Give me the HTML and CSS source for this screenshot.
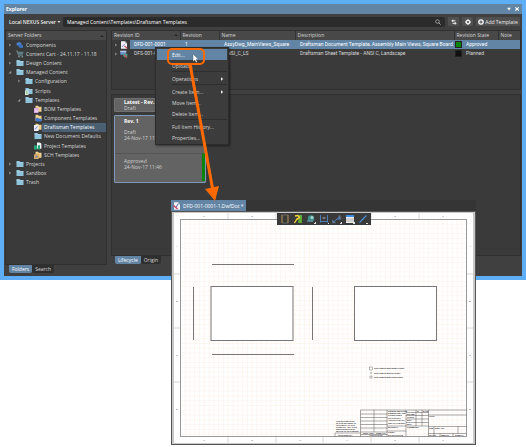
FILE: index.html
```html
<!DOCTYPE html>
<html lang="en">
<head>
  <meta charset="UTF-8">
  <title>Explorer</title>
  <link rel="stylesheet" href="styles.css">
</head>
<body>
  <!-- shared icons -->
  <svg class="defs" width="0" height="0">
    <symbol id="folder" viewBox="0 0 8 8"><path d="M0.5 1h3l0.8 1h3.2v5h-7z" fill="#8fc3dc"/><path d="M0.5 2.6h7" stroke="#b9dcec" stroke-width="0.5"/></symbol>
    <symbol id="folder-tan" viewBox="0 0 8 8"><path d="M1.5 0.8h2.6l0.7 0.9h2.7v5h-6z" fill="#ecd08e"/></symbol>
    <symbol id="page" viewBox="0 0 8 8"><path d="M1 0.3h4l2 2v5.4H1z" fill="#f2f2f4"/><path d="M5 0.3v2h2z" fill="#9aa6b4"/></symbol>
    <symbol id="open" viewBox="0 0 4 4"><path d="M3.2 0.8v2.6H0.6z" fill="#999"/></symbol>
    <symbol id="closed" viewBox="0 0 4 4"><path d="M1 0.4L3.4 2L1 3.6z" fill="#808080"/></symbol>
    <symbol id="submenu" viewBox="0 0 4 4"><path d="M1 0.2L3.2 2L1 3.8z" fill="#eee"/></symbol>
  </svg>

  <main class="explorer">
    <header class="titlebar">
      <h1>Explorer</h1>
      <button aria-label="Menu"><svg viewBox="0 0 6 6"><path d="M1 1.7h4L3 4.5z" fill="#fff"/></svg></button>
      <button aria-label="Close"><svg viewBox="0 0 6 6"><path d="M1.3 1.3l3.4 3.4M4.7 1.3L1.3 4.7" stroke="#fff" stroke-width="1.2"/></svg></button>
    </header>

    <div class="toolbar">
      <button class="server">Local NEXUS Server <svg viewBox="0 0 4 4"><path d="M0.4 1h3L2 3z" fill="#ddd"/></svg></button>
      <div class="path">
        <input type="text" aria-label="Path" value="Managed Content\Templates\Draftsman Templates">
        <svg viewBox="0 0 6 6"><circle cx="2.5" cy="2.5" r="1.8" fill="none" stroke="#aaa" stroke-width="0.8"/><path d="M3.8 3.8L5.6 5.6" stroke="#aaa"/></svg>
      </div>
      <button class="tool" aria-label="Refresh"><svg viewBox="0 0 6 6"><path d="M0.8 1.8h3.6M1.6 4.3h3.6" stroke="#eee" stroke-width="1"/><path d="M2.2 0.2v3.2L0.5 1.8zM3.8 2.7v3.2l1.7-1.6z" fill="#eee"/></svg></button>
      <button class="tool" aria-label="Settings"><svg viewBox="0 0 6 6"><circle cx="3" cy="3" r="1.7" fill="none" stroke="#eee" stroke-width="1.3"/><path d="M3 0v1M3 5v1M0 3h1M5 3h1M0.9 0.9l0.6 0.6M4.5 4.5l0.6 0.6M5.1 0.9l-0.6 0.6M0.9 5.1l0.6-0.6" stroke="#eee"/></svg></button>
      <button class="tool add"><svg viewBox="0 0 6 6"><circle cx="3" cy="3" r="2.8" fill="#fff"/><path d="M3 1.4v3.2M1.4 3h3.2" stroke="#484848"/></svg>Add Template</button>
    </div>

    <div class="panes">
      <section class="left">
        <div class="panel folders">
          <h2>Server Folders <svg viewBox="0 0 4 4"><path d="M0.2 3h3.6L2 1z" fill="#222"/></svg></h2>
          <ul class="tree">
            <li><svg><use href="#closed"/></svg><svg viewBox="0 0 8 8"><ellipse cx="3" cy="3" rx="2.6" ry="1.8" fill="#4f87cf"/><path d="M2 3l5 1v3H4L2 5z" fill="#3b6fb8"/></svg><span>Components</span></li>
            <li><svg><use href="#closed"/></svg><svg viewBox="0 0 8 8"><path d="M0 1h1.4l1 4.2h4.4" fill="none" stroke="#8aa" stroke-width="0.7"/><path d="M1.8 1.8h5.8L6.9 4.6H2.4z" fill="#5f7f88"/><circle cx="3" cy="6.7" r="0.7" fill="#9bb"/><circle cx="6.2" cy="6.7" r="0.7" fill="#9bb"/></svg><span>Content Cart - 24.11.17 - 11.18</span></li>
            <li><svg><use href="#closed"/></svg><svg><use href="#folder"/></svg><span>Design Content</span></li>
            <li><svg><use href="#open"/></svg><svg><use href="#folder"/></svg><span>Managed Content</span></li>
            <li class="level1"><svg><use href="#closed"/></svg><svg><use href="#folder"/></svg><span>Configuration</span></li>
            <li class="level1"><svg></svg><svg viewBox="0 0 8 8"><use href="#folder"/><path d="M0 3.4h3.6V8H0z" fill="#d5ecd9"/><path d="M0.8 4.8h2M0.8 6.2h2" stroke="#5a9a6a" stroke-width="0.6"/></svg><span>Scripts</span></li>
            <li class="level1"><svg><use href="#open"/></svg><svg><use href="#folder"/></svg><span>Templates</span></li>
            <li class="level2"><svg></svg><svg viewBox="0 0 8 8"><use href="#folder-tan"/><path d="M0 3h4.4v5H0z" fill="#d8a0e0"/><path d="M0.8 5h3M0.8 6.4h3" stroke="#fff" stroke-width="0.6"/></svg><span>BOM Templates</span></li>
            <li class="level2"><svg></svg><svg viewBox="0 0 8 8"><use href="#folder-tan"/><path d="M1 5.2l2-1.4 4.6 1.4v2.4H3z" fill="#3d74cc"/></svg><span>Component Templates</span></li>
            <li class="level2 selected"><svg></svg><svg viewBox="0 0 8 8"><use href="#folder-tan"/><path d="M0 2h4.6v6H0z" fill="#f2eefc"/><path d="M1 6.5l2.4-3" stroke="#5b62c0" stroke-width="0.8"/></svg><span>Draftsman Templates</span></li>
            <li class="level2"><svg></svg><svg><use href="#folder"/></svg><span>New Document Defaults</span></li>
            <li class="level2"><svg></svg><svg viewBox="0 0 8 8"><path d="M3 0.4h3l1.4 1.4v5H3z" fill="#f1f7f4"/><path d="M0 3.4h3.2v4H0zM4 3.2h2v4.2H4z" fill="#22a878"/></svg><span>Project Templates</span></li>
            <li class="level2"><svg></svg><svg viewBox="0 0 8 8"><use href="#folder-tan"/><path d="M0 3.8l2-1h3.4V7L4 8H0z" fill="#dcb062"/><path d="M1.4 4.6h2.2v2H1.4z" fill="#7d7cb0"/></svg><span>SCH Templates</span></li>
            <li><svg><use href="#closed"/></svg><svg><use href="#folder"/></svg><span>Projects</span></li>
            <li><svg><use href="#closed"/></svg><svg><use href="#folder"/></svg><span>Sandbox</span></li>
            <li><svg></svg><svg><use href="#folder"/></svg><span>Trash</span></li>
          </ul>
        </div>
        <nav class="tabs"><button class="active">Folders</button><button>Search</button></nav>
      </section>

      <section class="right">
        <div class="panel revisions">
          <table>
            <colgroup><col class="c-id"><col class="c-rev"><col class="c-name"><col><col class="c-state"><col class="c-note"></colgroup>
            <thead>
              <tr><th>Revision ID <svg viewBox="0 0 4 4"><path d="M0.2 3h3.6L2 1z" fill="#222"/></svg></th><th>Revision</th><th>Name</th><th>Description</th><th>Revision State</th><th>Note</th></tr>
            </thead>
            <tbody>
              <tr class="selected">
                <td><div class="item"><svg><use href="#closed"/></svg><svg viewBox="0 0 8 8"><use href="#page"/><path d="M2 6l2.5-3" stroke="#6470c8" stroke-width="0.8"/><path d="M4.5 5l2.8 2.4" stroke="#d04a5a" stroke-width="1.2"/></svg><span>DFD-001-0001</span></div></td>
                <td>1</td><td>AssyDwg_MainViews_Square</td><td>Draftsman Document Template, Assembly Main Views, Square Board</td>
                <td><i class="swatch approved"></i>Approved</td><td></td>
              </tr>
              <tr>
                <td><div class="item"><svg><use href="#closed"/></svg><svg viewBox="0 0 8 8"><path d="M0.3 0.8h6v4h-6z" fill="#6d8ed0"/><path d="M0.3 0.8h6v1.3h-6z" fill="#bcd"/><path d="M2.5 3.8h4.8v3.4H4z" fill="#4fa287"/><path d="M4 5l3 2.6" stroke="#d04a5a" stroke-width="1.2"/></svg><span>DFS-001-0001</span></div></td>
                <td>1</td><td>ANSI_C_LS</td><td>Draftsman Sheet Template - ANSI C, Landscape</td>
                <td><i class="swatch planned"></i>Planned</td><td></td>
              </tr>
            </tbody>
          </table>
        </div>
        <div class="panel lifecycle">
          <article class="card latest"><h3>Latest - Rev.</h3><p>Draft</p></article>
          <article class="card current">
            <h3>Rev. 1</h3>
            <p>Draft<br>24-Nov-17 11:46</p>
            <p class="state">Approved<br>24-Nov-17 11:46</p>
          </article>
        </div>
        <nav class="tabs"><button class="active">Lifecycle</button><button>Origin</button></nav>
      </section>
    </div>
  </main>

  <menu class="context">
    <li><button class="hover">Edit...</button></li>
    <li><button>Upload...</button></li>
    <li class="sep"></li>
    <li><button>Operations <svg><use href="#submenu"/></svg></button></li>
    <li class="sep"></li>
    <li><button>Create Item... <svg><use href="#submenu"/></svg></button></li>
    <li><button>Move Item...</button></li>
    <li><button>Delete Item...</button></li>
    <li class="sep"></li>
    <li><button>Full Item History...</button></li>
    <li><button>Properties...</button></li>
  </menu>

  <section class="document">
    <div class="doc-tabs">
      <button><svg viewBox="0 0 8 8"><use href="#page"/><path d="M2.5 6l2.5-4" stroke="#5666c8"/><path d="M0.5 3.5l4 3.5" stroke="#d0405a" stroke-width="1.3"/></svg>DFD-001-0001-1.DwfDot *</button>
    </div>
    <div class="sheet">
      <svg class="drawing" viewBox="0 0 299 230">
        <defs>
          <pattern id="grid" x="6" y="6" width="4.77" height="4.77" patternUnits="userSpaceOnUse"><path d="M4.77 0H0V4.77" fill="none" stroke="#fbece1" stroke-width="0.8"/></pattern>
        </defs>
        <rect x="6.5" y="6.5" width="286" height="217" fill="url(#grid)" stroke="#999"/>
        <!-- zone marks -->
        <path d="M54 0v6M102 0v6M149 0v6M197 0v6M245 0v6M54 224v6M102 224v6M149 224v6M197 224v6M245 224v6M0 61h6M0 115h6M0 169h6M293 61h6M293 115h6M293 169h6" stroke="#ccc" stroke-width="0.8"/>
        <g class="zones">
          <text x="30" y="4">1</text><text x="78" y="4">2</text><text x="126" y="4">3</text><text x="173" y="4">4</text><text x="221" y="4">5</text><text x="269" y="4">6</text>
          <text x="30" y="228">1</text><text x="78" y="228">2</text><text x="126" y="228">3</text><text x="173" y="228">4</text><text x="221" y="228">5</text><text x="269" y="228">6</text>
          <text x="3" y="34">A</text><text x="3" y="89">B</text><text x="3" y="143">C</text><text x="3" y="197">D</text>
          <text x="296" y="34">A</text><text x="296" y="89">B</text><text x="296" y="143">C</text><text x="296" y="197">D</text>
        </g>
        <!-- board views -->
        <g fill="#fff" stroke="#777" stroke-width="1">
          <rect x="37" y="73.5" width="82" height="54"/>
          <rect x="180.5" y="73.5" width="82" height="54"/>
          <path d="M38 51.5h82M38 141.5h82M19.5 74v53M138.5 74v53"/>
        </g>
        <!-- legend -->
        <g class="legend">
          <rect x="195.5" y="154" width="3" height="3"/><text x="200" y="156">Test element with square center</text>
          <circle cx="197" cy="160" r="0.6"/><text x="200" y="161">Test element with no center</text>
          <rect x="196" y="163" width="2" height="2"/><text x="200" y="165">Test element with cross center</text>
        </g>
        <!-- title block -->
        <g class="title-block">
          <path d="M186.5 197h106M186.5 197v26.5M200 197v22M213 197v26.5M232 197v26.5M254.5 197v26.5M186.5 201h27M186.5 204.5h27M186.5 208h27M186.5 211.5h27M186.5 215h27M186.5 219h27M186.5 221.5h27M232 199.5h22.5M232 202.5h22.5M232 206h22.5M232 209.5h22.5M232 213h22.5M242 197v16M248 197v16M254.5 202h38M254.5 213.5h38M254.5 220.5h38M260 213.5v10M284 213.5v7M266 220.5v3M279 220.5v3M213 213h19M213 218h19M161 220h25.5M161 220v3.5"/>
          <text x="162" y="209">THE INFORMATION</text><text x="162" y="211">IN THIS DRAWING IS</text><text x="162" y="213">PROPERTY OF THE</text><text x="162" y="215">COMPANY. ANY PART</text><text x="162" y="217">REPRODUCTION IN</text><text x="162" y="219">WHOLE IS PROHIBITED</text><text x="164" y="223">PROPRIETARY</text>
          <text x="214" y="199">UNLESS SPECIFIED</text><text x="214" y="201">DIMENSIONS ARE</text><text x="214" y="203">TOLERANCES</text><text x="214" y="206">FRACTIONAL</text><text x="214" y="208">ANGULAR MACH</text><text x="214" y="211">TWO PLACE DEC.</text><text x="214" y="215">MATERIAL</text><text x="214" y="220">FINISH</text><text x="214" y="223">DO NOT SCALE</text>
          <text x="243" y="199">N.</text><text x="249" y="199">DATE</text><text x="233" y="202">DRAWN</text><text x="233" y="205">CHECK</text><text x="233" y="208">ENG</text><text x="233" y="212">MFG</text><text x="233" y="215">COMMENTS</text>
          <text x="189" y="221">NEXT ASSY</text><text x="202" y="221">USED ON</text><text x="195" y="223">APPLICATION</text>
          <text x="255" y="204">TITLE</text><text x="255" y="216">SIZE</text><text x="261" y="216">DWG. NO.</text><text x="255" y="223">SCALE</text><text x="267" y="223">WEIGHT</text><text x="281" y="223">SHEET 1</text>
        </g>
      </svg>
      <div class="draw-tools">
        <button aria-label="Board view"><svg viewBox="0 0 10 10"><path d="M2 1v8h6V1z" fill="none" stroke="#777" stroke-width="0.7"/><path d="M2 1v8M8 1v8" stroke="#b08a40" stroke-width="0.9"/></svg></button>
        <button aria-label="Drill view"><svg viewBox="0 0 10 10"><path d="M6 1h3v8H5z" fill="#5fa832"/><path d="M1.5 9l3-5M2 2l3-0.5 1.5 2-2.5 2" fill="none" stroke="#f2d230" stroke-width="1.4"/></svg></button>
        <button class="more" aria-label="Detail view"><svg viewBox="0 0 10 10"><circle cx="5" cy="4.5" r="3.2" fill="#3d8f8a"/><circle cx="6" cy="3.5" r="1.5" fill="#a8d4d0"/><path d="M1 7h6" stroke="#5c8f9a" stroke-width="1.5"/></svg></button>
        <button class="more" aria-label="Dimension"><svg viewBox="0 0 10 10"><path d="M1.5 1v7.5M8.5 1v7.5M1.5 7.5h7" stroke="#4d84c4" stroke-width="0.9" fill="none"/><path d="M3.5 3h3v2h-3z" fill="#777"/></svg></button>
        <button class="more" aria-label="Callout"><svg viewBox="0 0 10 10"><path d="M1.5 8L5 5h4" fill="none" stroke="#4d84c4"/><path d="M0.5 6v3h3zM6 4.5L7.5 1 9 4.5" fill="#4d84c4" stroke="#777" stroke-width="0.5"/></svg></button>
        <button class="more" aria-label="Table"><svg viewBox="0 0 10 10"><path d="M1 1h8v8H1z" fill="#eee"/><path d="M1 1h8v2H1z" fill="#3f8be0"/><path d="M1 5h8M1 7h8" stroke="#888" stroke-width="0.6"/></svg></button>
        <button class="more" aria-label="Line"><svg viewBox="0 0 10 10"><path d="M1.5 8.5l7-7" stroke="#4a8fe0" stroke-width="1.1"/></svg></button>
      </div>
    </div>
  </section>

  <!-- click callout and arrow to the opened document -->
  <svg class="callout" width="70" height="160" viewBox="0 0 70 160">
    <path d="M35 20L58 147" stroke="#ff6a00" stroke-width="3"/>
    <path d="M50 145l14-3-4 15z" fill="#ff6a00"/>
    <rect x="13" y="5" width="36" height="15" rx="4" fill="none" stroke="#ff6a00" stroke-width="2"/>
    <path d="M38 10v7.5l1.8-1.5 1.3 2.6 1.2-0.6-1.2-2.5h2.3z" fill="#fff" stroke="#333" stroke-width="0.3"/>
  </svg>
</body>
</html>
```
FILE: styles.css
```css
* {
  box-sizing: border-box;
}
body {
  margin: 0;
  background: #fff;
  color: #d8d8d8;
  font: 5px/8px "Open Sans", sans-serif;
  position: relative;
}
h1, h2, h3, p, ul, menu {
  margin: 0;
  padding: 0;
  font-size: 5px;
  list-style: none;
}
button, input {
  font: inherit;
  color: inherit;
  background: none;
  border: 0;
  padding: 0;
}
svg {
  display: block;
  flex: none;
}
.defs {
  position: absolute;
}

/* explorer window */
.explorer {
  border: 4px solid #5eaef6;
  background: #404040;
  height: 280px;
  display: flex;
  flex-direction: column;
}
.titlebar {
  height: 10px;
  background: #6285a5;
  display: flex;
  align-items: center;
  gap: 2px;
  padding: 0 2px;
}
.titlebar h1 {
  flex: 1;
  color: #fff;
}
.titlebar svg {
  width: 6px;
  height: 6px;
}
.toolbar {
  display: flex;
  align-items: center;
  gap: 3px;
  padding: 2px 2px 2px 5px;
  height: 15px;
}
.server {
  width: 51px;
  display: flex;
  align-items: center;
  gap: 1px;
  font-weight: 600;
  white-space: nowrap;
  color: #eee;
}
.server svg {
  width: 4px;
  height: 4px;
}
.path {
  flex: 1;
  height: 10px;
  background: #2b2b2b;
  border-radius: 2px;
  display: flex;
  align-items: center;
  padding: 0 4px;
}
.path input {
  flex: 1;
  color: #fff;
}
.path svg {
  width: 6px;
  height: 6px;
}
.tool {
  width: 11px;
  height: 9px;
  background: #505050;
  border-radius: 1px;
  display: flex;
  align-items: center;
  justify-content: center;
  gap: 1px;
  color: #eee;
  white-space: nowrap;
}
.tool svg {
  width: 6px;
  height: 6px;
}
.tool.add {
  width: 44px;
}
.panes {
  flex: 1;
  display: flex;
  gap: 4px;
  padding: 1px 1px 3px;
}
.left {
  width: 102px;
  display: flex;
  flex-direction: column;
}
.right {
  flex: 1;
  min-width: 0;
  display: flex;
  flex-direction: column;
  padding-bottom: 9px;
}
.panel {
  background: #3a3a3a;
  border: 1px solid #303030;
}
.folders {
  flex: 1;
}
.folders h2, th {
  height: 9px;
  background: #484848;
  font-weight: normal;
  line-height: 9px;
}
.folders h2 {
  display: flex;
  align-items: center;
  justify-content: space-between;
  padding: 0 2px;
}
h2 svg, th svg {
  width: 4px;
  height: 4px;
}

/* folder tree */
.tree {
  display: grid;
  grid-auto-rows: 1fr;
  height: 147px;
}
.tree li {
  display: flex;
  align-items: center;
  padding-left: 2px;
  white-space: nowrap;
}
.tree svg, .item svg {
  width: 8px;
  height: 8px;
}
.tree svg:first-child, .item svg:first-child {
  width: 4px;
  height: 4px;
  margin-right: 4px;
}
.tree span {
  padding: 0 2px;
}
.tree .level1 {
  padding-left: 11px;
}
.tree .level2 {
  padding-left: 20px;
}
.tree .selected span {
  flex: 1;
  align-self: stretch;
  line-height: 9px;
  background: #4b5f72;
  color: #fff;
}

.tabs {
  display: flex;
  padding-left: 4px;
}
.tabs button {
  height: 8px;
  padding: 0 3px;
  background: #2f2f2f;
  border-radius: 0 0 2px 2px;
}
.tabs .active {
  background: #6285a5;
  color: #fff;
}

/* revision list */
.revisions {
  height: 60px;
}
table {
  width: 100%;
  table-layout: fixed;
  border-collapse: collapse;
  white-space: nowrap;
}
th, td {
  padding: 0 0 0 2px;
  height: 9px;
  line-height: 9px;
  text-align: left;
}
th + th {
  border-left: 1px solid #333;
}
th svg {
  float: right;
  margin: 2px;
}
td {
  font-family: Roboto, sans-serif;
}
td + td {
  padding-left: 5px;
}
td:nth-child(5) {
  padding-left: 1px;
}
.c-id {
  width: 68px;
}
.c-rev {
  width: 39px;
}
.c-name {
  width: 76px;
}
.c-state {
  width: 44px;
}
.c-note {
  width: 22px;
}
.item {
  display: flex;
  align-items: center;
}
.item svg:first-child {
  margin-right: 2px;
}
.item span {
  flex: 1;
  padding-left: 4px;
  margin-left: 2px;
}
.revisions .selected td {
  color: #fff;
  background: #6285a5;
}
.revisions .selected td:first-child {
  background: linear-gradient(to right, #3a3a3a 18px, #6285a5 18px);
}
.swatch {
  float: left;
  width: 7px;
  height: 7px;
  margin: 1px 4px 0 0;
  border: 1px solid #222;
}
.approved {
  background: #0a850a;
}
.planned {
  background: #111;
}

/* lifecycle */
.lifecycle {
  flex: 1;
  margin-top: 4px;
  padding: 3px 2px;
}
.card {
  width: 92px;
  background: #636363;
  border: 1px solid #707070;
  border-radius: 1px;
  padding-left: 9px;
  line-height: 6px;
  color: #d0d0d0;
}
.card h3 {
  color: #fff;
}
.latest {
  height: 14px;
}
.current {
  height: 68px;
  margin-top: 3px;
  border-color: #8098bc;
}
.current h3 {
  line-height: 10px;
  padding-bottom: 3px;
}
.current .state {
  height: 28px;
  margin: 12px 0 0 -9px;
  padding: 4px 0 0 9px;
  border-top: 1px solid #555;
  border-right: 3px solid #0a850a;
}

/* context menu */
.context {
  position: absolute;
  left: 155px;
  top: 47px;
  width: 74px;
  padding: 1px;
  background: #3c3c3c;
  border: 1px solid #2c2c2c;
  box-shadow: 1px 1px 2px rgba(0, 0, 0, 0.5);
}
.context button {
  width: 100%;
  height: 11px;
  padding: 0 3px 0 15px;
  display: flex;
  align-items: center;
  justify-content: space-between;
}
.context .hover {
  background: #6285a5;
  color: #fff;
}
.context svg {
  width: 4px;
  height: 4px;
}
.context .sep {
  height: 2px;
  margin-left: 15px;
  border-top: 1px solid #2e2e2e;
}

/* opened document, laid over the lower part of the explorer */
.document {
  position: relative;
  width: 305px;
  margin: -80px 0 0 171px;
}
.doc-tabs {
  background: #353535;
  height: 11px;
}
.doc-tabs button {
  height: 11px;
  width: 75px;
  padding: 0 2px;
  background: #6285a5;
  color: #fff;
  display: flex;
  align-items: center;
  gap: 2px;
  white-space: nowrap;
}
.doc-tabs svg {
  width: 8px;
  height: 8px;
}
.sheet {
  position: relative;
  background: #fff;
  border: solid #c8c8c8;
  border-width: 2px 3px;
  outline: 1px solid #555;
  outline-offset: -1px;
}
.drawing {
  width: 100%;
}
.drawing text {
  font-family: "Liberation Sans", sans-serif;
  font-size: 2px;
  font-weight: bold;
  fill: #222;
}
.drawing .zones text {
  font-weight: normal;
  text-anchor: middle;
}
.legend {
  fill: none;
  stroke: #777;
  stroke-width: 0.5px;
}
.title-block {
  fill: none;
  stroke: #555;
  stroke-width: 0.5px;
}
.drawing g text {
  stroke: none;
}
.draw-tools {
  position: absolute;
  left: 103px;
  top: 0;
  height: 12px;
  padding: 0 3px;
  background: #3a3a3a;
  display: flex;
  align-items: center;
  gap: 3px;
}
.draw-tools svg {
  width: 10px;
  height: 10px;
}
.more {
  background: linear-gradient(135deg, transparent 90%, #ddd 90%);
}

.callout {
  position: absolute;
  left: 155px;
  top: 44px;
}
```
